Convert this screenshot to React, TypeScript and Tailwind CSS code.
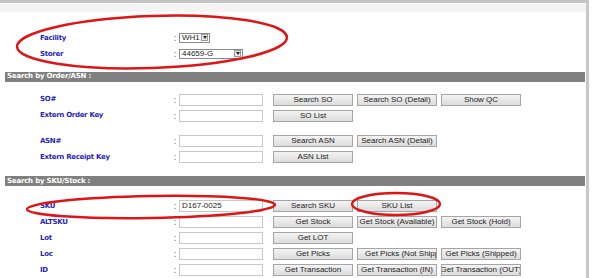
import type { ReactNode } from "react";

const labelFont = { fontFamily: '"DejaVu Sans", Verdana, sans-serif' };

function Btn({ children, left = false }: { children: ReactNode; left?: boolean }) {
  return (
    <div
      className={`flex h-[12px] w-[80px] shrink-0 items-center overflow-hidden whitespace-nowrap border border-[#a5a5a5] bg-gradient-to-b from-[#f4f4f4] to-[#dcdcdc] font-['Liberation_Sans',Arial,sans-serif] text-[8px] leading-none text-[#222] ${
        left ? "justify-start pl-[7px]" : "justify-center"
      }`}
    >
      {children}
    </div>
  );
}

function Label({ text }: { text: string }) {
  return (
    <div
      className="w-[174px] shrink-0 pl-[40px] text-[7px] font-bold tracking-[-0.3px] text-[#2525c0]"
      style={labelFont}
    >
      {text}
    </div>
  );
}

function Row({
  label,
  value,
  buttons = [],
}: {
  label: string;
  value?: string;
  buttons?: ReactNode[];
}) {
  return (
    <div className="flex h-[16px] items-center">
      <Label text={label} />
      <div className="w-[5px] shrink-0 text-[8px] leading-none text-[#555]">:</div>
      <div className="flex h-[12px] w-[84px] shrink-0 items-center border border-[#c8c8c8] bg-white pl-[2px] font-['Liberation_Sans',Arial,sans-serif] text-[8px] text-[#222]">
        {value}
      </div>
      <div className="ml-[10px] flex gap-[4px]">{buttons}</div>
    </div>
  );
}

function Header({ title }: { title: string }) {
  return (
    <div
      className="ml-[5px] flex h-[10px] w-[580px] items-center bg-[#808080] pl-[2px] text-[7px] font-bold leading-none tracking-[-0.2px] text-white"
      style={labelFont}
    >
      {title}
    </div>
  );
}

function Select({ value, width }: { value: string; width: string }) {
  return (
    <div
      className={`flex h-[10px] ${width} items-center justify-between border border-[#8a8a8a] bg-white pl-[2px] pr-[1px] font-['Liberation_Sans',Arial,sans-serif] text-[8px] leading-none text-[#222]`}
    >
      <span>{value}</span>
      <span className="flex h-[7px] w-[7px] items-center justify-center border border-[#9a9a9a] bg-[#e8e8e8]">
        <svg width="4" height="3" viewBox="0 0 4 3">
          <path d="M0 0h4L2 3z" fill="#222" />
        </svg>
      </span>
    </div>
  );
}

function TopRow({ label, children }: { label: string; children: ReactNode }) {
  return (
    <div className="flex h-[16px] items-center">
      <Label text={label} />
      <div className="w-[5px] shrink-0 text-[8px] leading-none text-[#555]">:</div>
      {children}
    </div>
  );
}

export default function App() {
  return (
    <div className="relative h-[278px] w-[592px] overflow-hidden bg-white">
      <div className="flex h-full">
        <div className="flex w-[586px] flex-col">
          <div className="h-[3px] bg-[#c4c4c4]" />
          <div className="mt-[1px] h-[8px] bg-[#f4f4f4]" />
          <div className="h-[18px]" />
          <TopRow label="Facility">
            <Select value="WH1" width="w-[31px]" />
          </TopRow>
          <TopRow label="Storer">
            <Select value="44659-G" width="w-[64px]" />
          </TopRow>
          <div className="h-[10px]" />
          <Header title="Search by Order/ASN :" />
          <div className="h-[10px]" />
          <Row
            label="SO#"
            buttons={[
              <Btn key="a">Search SO</Btn>,
              <Btn key="b">Search SO (Detail)</Btn>,
              <Btn key="c">Show QC</Btn>,
            ]}
          />
          <Row label="Extern Order Key" buttons={[<Btn key="a">SO List</Btn>]} />
          <div className="h-[10px]" />
          <Row
            label="ASN#"
            buttons={[
              <Btn key="a">Search ASN</Btn>,
              <Btn key="b">Search ASN (Detail)</Btn>,
            ]}
          />
          <Row label="Extern Receipt Key" buttons={[<Btn key="a">ASN List</Btn>]} />
          <div className="h-[11px]" />
          <Header title="Search by SKU/Stock :" />
          <div className="h-[12px]" />
          <Row
            label="SKU"
            value="D167-0025"
            buttons={[<Btn key="a">Search SKU</Btn>, <Btn key="b">SKU List</Btn>]}
          />
          <Row
            label="ALTSKU"
            buttons={[
              <Btn key="a">Get Stock</Btn>,
              <Btn key="b">Get Stock (Available)</Btn>,
              <Btn key="c">Get Stock (Hold)</Btn>,
            ]}
          />
          <Row label="Lot" buttons={[<Btn key="a">Get LOT</Btn>]} />
          <Row
            label="Loc"
            buttons={[
              <Btn key="a">Get Picks</Btn>,
              <Btn key="b" left>
                Get Picks (Not Shipped)
              </Btn>,
              <Btn key="c">Get Picks (Shipped)</Btn>,
            ]}
          />
          <Row
            label="ID"
            buttons={[
              <Btn key="a">Get Transaction</Btn>,
              <Btn key="b">Get Transaction (IN)</Btn>,
              <Btn key="c">Get Transaction (OUT)</Btn>,
            ]}
          />
        </div>
        <div className="w-[3px] bg-[#c8c8c8]" />
      </div>
      <svg
        className="pointer-events-none absolute inset-0"
        width="592"
        height="278"
        viewBox="0 0 592 278"
      >
        <g fill="none" stroke="#dd1515" strokeWidth="2.5">
          <ellipse cx="152" cy="42" rx="135" ry="26" transform="rotate(-2 152 42)" />
          <ellipse cx="151" cy="207" rx="124" ry="11" transform="rotate(-1 151 207)" />
          <ellipse cx="396" cy="204" rx="44" ry="11" />
        </g>
      </svg>
    </div>
  );
}
